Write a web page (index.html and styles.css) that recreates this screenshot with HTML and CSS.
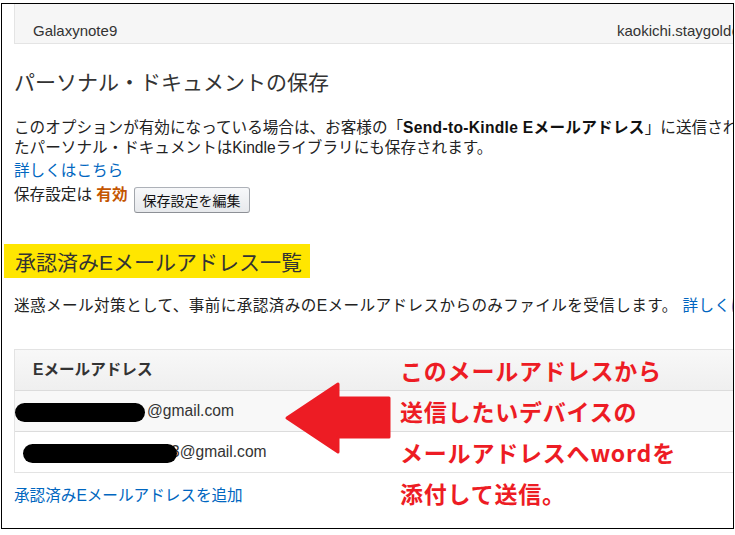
FILE: index.html
```html
<!DOCTYPE html>
<html>

<head>
  <meta charset="UTF-8">
  <title>パーソナル・ドキュメント設定</title>
  <link rel="stylesheet" href="styles.css">
</head>

<body>

  <div class="frame">
    <div class="page">

      <div class="device">
        <span class="device-name">Galaxynote9</span>
        <span class="device-mail">kaokichi.staygold@kindle.com</span>
      </div>

      <h2 class="title">パーソナル・ドキュメントの保存</h2>
      <p class="desc">
        このオプションが有効になっている場合は、お客様の「<b>Send-to-Kindle Eメールアドレス</b>」に送信され<br>
        たパーソナル・ドキュメントはKindleライブラリにも保存されます。
      </p>
      <a class="more" href="#">詳しくはこちら</a>
      <div class="setting">
        <span>保存設定は <b class="on">有効</b></span>
        <button class="btn">保存設定を編集</button>
      </div>

      <h2 class="title marked">承認済みEメールアドレス一覧</h2>
      <p class="desc desc-2">
        迷惑メール対策として、事前に承認済みのEメールアドレスからのみファイルを受信します。 <a href="#">詳しくはこちら</a>
      </p>

      <div class="emails">
        <div class="head">Eメールアドレス</div>
        <div class="row shaded"><span class="mask m1"></span>@gmail.com</div>
        <div class="row"><span class="mask m2"></span>3@gmail.com</div>
      </div>
      <a class="more add" href="#">承認済みEメールアドレスを追加</a>

    </div>

    <!-- red marker drawn over the screenshot -->
    <svg class="arrow" width="108" height="76" viewBox="0 0 108 76">
      <polygon points="3,38 54,4 54,18 105,18 105,57 54,57 54,72" fill="#ed1c24" stroke="#ed1c24" stroke-width="3" stroke-linejoin="round" />
    </svg>
    <div class="note">
      このメールアドレスから<br>
      送信したいデバイスの<br>
      メールアドレスへwordを<br>
      添付して送信。
    </div>
  </div>

</body>

</html>
```

FILE: styles.css
```css
html {
  background: white;
}

body {
  margin: 0;
  font-family: "Liberation Sans", "Noto Sans CJK JP", sans-serif;
  font-size: 15.6px;
  color: #222;
}

.frame {
  position: relative;
  box-sizing: border-box;
  width: 733px;
  height: 526px;
  margin: 3px 0 0 1px;
  border: 1px solid black;
  overflow: hidden;
}

.page {
  width: 900px;
  padding-left: 12px;
}

.device {
  display: flex;
  box-sizing: border-box;
  height: 40px;
  padding: 17px 0 0 18px;
  background: #f6f6f6;
  border-left: 1px solid #e4e4e4;
  border-bottom: 1px solid #e4e4e4;
  font-size: 15px;
  line-height: 20px;
  color: #333;
}

.device-name {
  width: 584px;
}

.title {
  margin: 25px 0 0;
  font-size: 21px;
  font-weight: normal;
  line-height: 28px;
  color: #333;
}

.desc {
  margin: 21px 0 0;
  line-height: 20px;
  white-space: nowrap;
}

.desc b {
  color: #111;
  letter-spacing: 0.3px;
}

a {
  color: #0066c0;
  text-decoration: none;
}

.more {
  display: block;
  margin-top: 3px;
  line-height: 20px;
}

.setting {
  display: flex;
  align-items: flex-start;
  margin-top: 4px;
  line-height: 20px;
}

.on {
  color: #c45500;
}

.btn {
  height: 26px;
  margin: 2px 0 0 6px;
  padding: 0 8px;
  font-family: "Noto Sans CJK JP", sans-serif;
  font-size: 14px;
  line-height: 24px;
  color: #111;
  background: linear-gradient(#f7f8fa, #e7e9ec);
  border: 1px solid;
  border-color: #adb1b8 #a2a6ac #8d9096;
  border-radius: 3px;
}

.marked {
  display: inline-block;
  margin: 31px 0 0 -10px;
  padding: 4px 8px 0 11px;
  line-height: 30px;
  background: #ffe600;
}

.desc-2 {
  margin-top: 18px;
  letter-spacing: 0.4px;
}

.emails {
  margin-top: 33px;
  border: 1px solid #e3e3e3;
  border-right: none;
}

.head {
  height: 40px;
  padding-left: 18px;
  line-height: 40px;
  font-weight: bold;
  color: #333;
  background: linear-gradient(#f8f8f8, #efefef);
  border-bottom: 1px solid #dcdcdc;
}

.row {
  height: 40px;
  padding-left: 18px;
  line-height: 40px;
  color: #333;
}

.shaded {
  background: #f8f8f8;
  border-bottom: 1px solid #dcdcdc;
}

.mask {
  position: relative;
  z-index: 1;
  display: inline-block;
  height: 19px;
  border-radius: 10px;
  background: black;
  vertical-align: -6px;
}

.m1 {
  width: 130px;
  margin: 0 2px 0 -18px;
}

.m2 {
  width: 154px;
  margin: 0 -6px 0 -10px;
}

.add {
  margin-top: 13px;
}

.arrow {
  position: absolute;
  left: 282px;
  top: 376px;
}

.note {
  position: absolute;
  left: 398px;
  top: 346px;
  font-family: "Noto Sans CJK JP", sans-serif;
  font-size: 23px;
  font-weight: bold;
  line-height: 41px;
  letter-spacing: 0.8px;
  color: #ed1c24;
  white-space: nowrap;
}
```
